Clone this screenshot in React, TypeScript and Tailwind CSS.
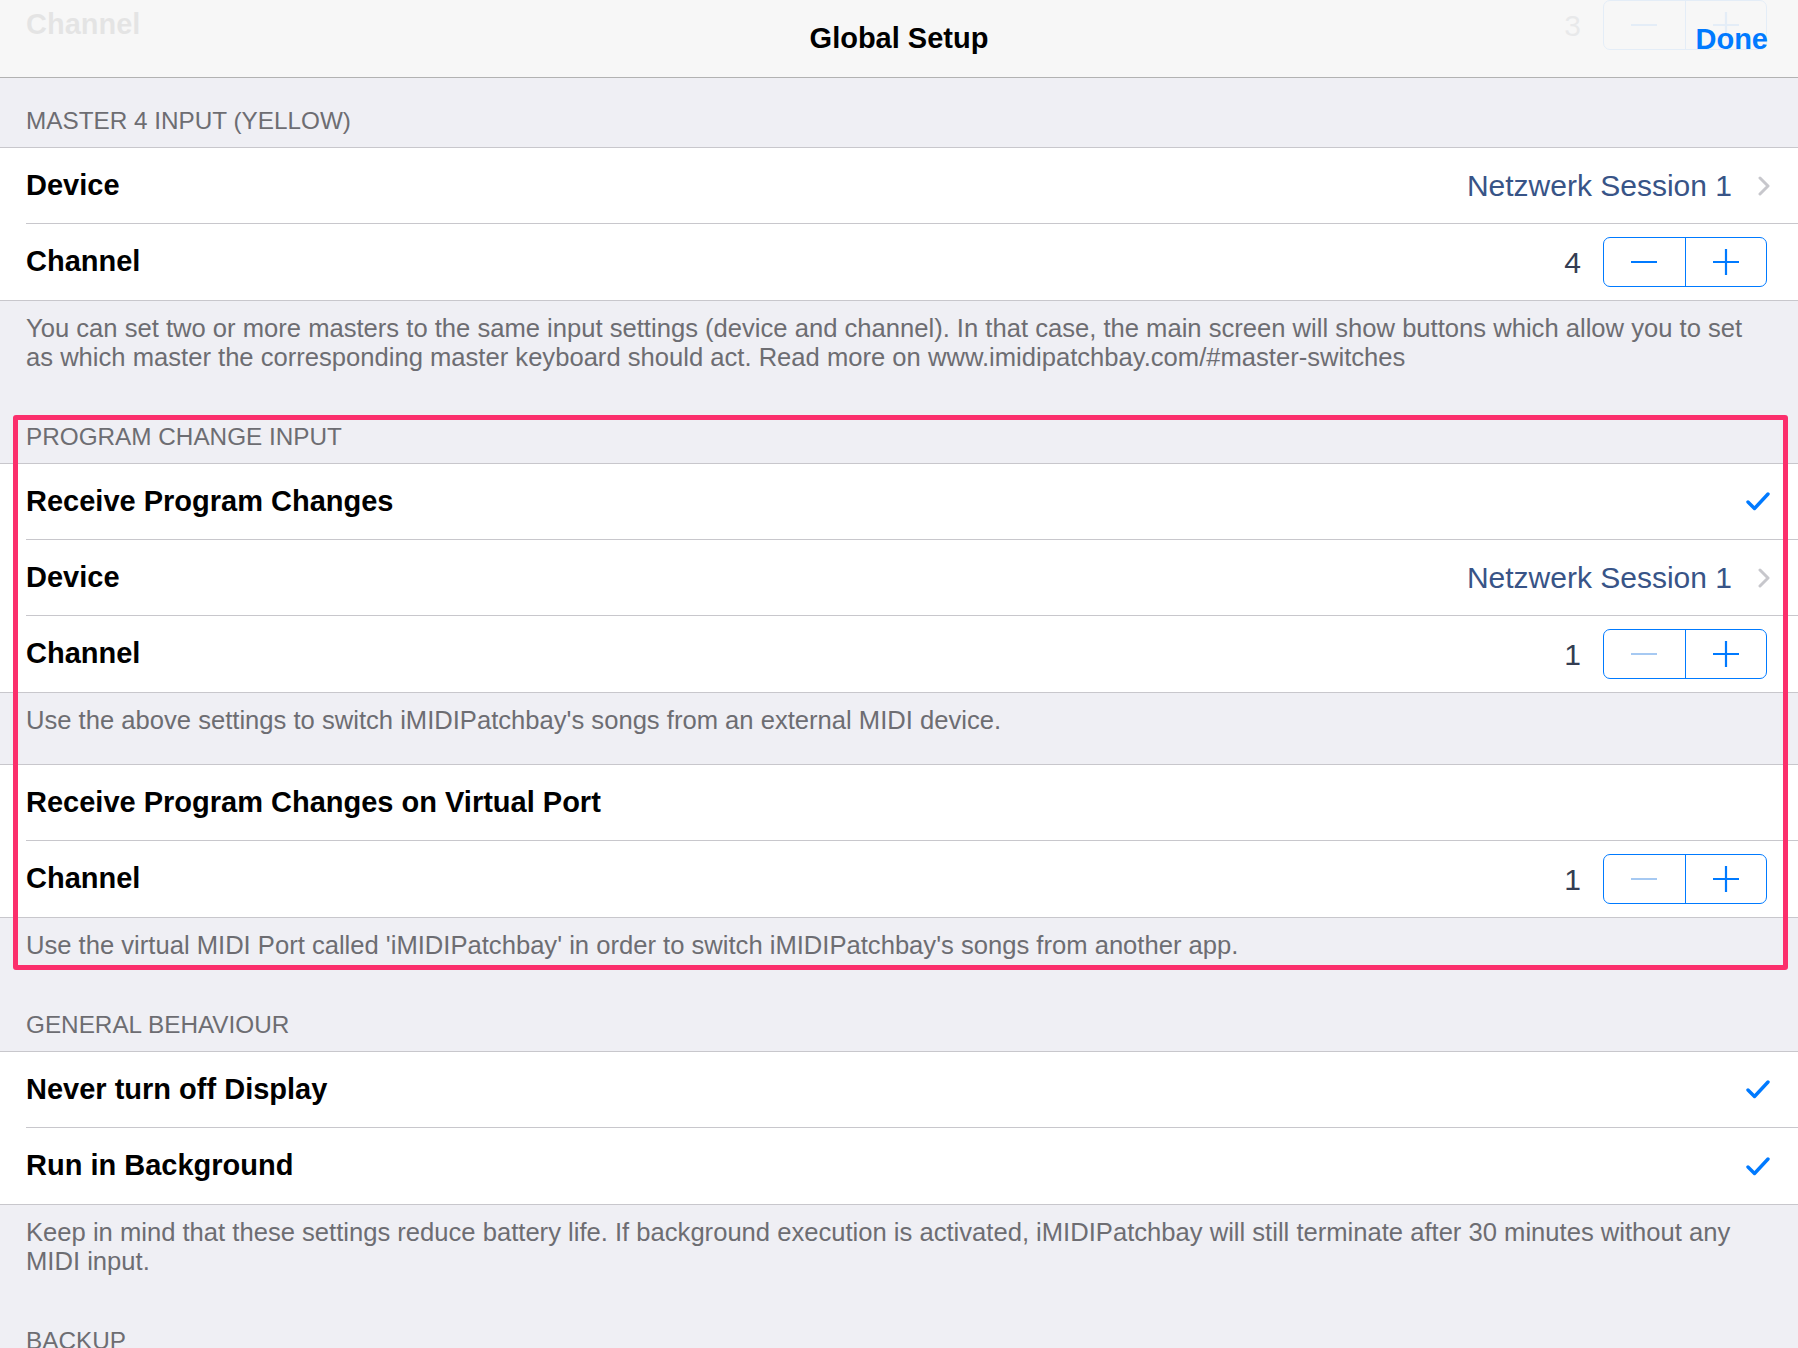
import React from 'react'

// iOS 7 style settings sheet: "Global Setup"

const FONT = "font-['Liberation_Sans',Arial,sans-serif]"

function Chevron() {
  return (
    <svg width="12" height="20" viewBox="0 0 12 20" className="ml-[26px]">
      <path d="M2 2 L10 10 L2 18" fill="none" stroke="#c7c7cc" strokeWidth="3" strokeLinecap="round" strokeLinejoin="round" />
    </svg>
  )
}

function Check() {
  return (
    <svg width="24" height="19" viewBox="0 0 24 19">
      <path d="M2 10 L8.5 16.5 L22 2" fill="none" stroke="#007aff" strokeWidth="3.4" strokeLinecap="round" strokeLinejoin="round" />
    </svg>
  )
}

function Stepper({ minusDisabled = false }: { minusDisabled?: boolean }) {
  return (
    <div className="flex h-[50px] w-[164px] rounded-[7px] border-[1.5px] border-[#007aff] mr-[3px]">
      <div className="flex flex-1 items-center justify-center border-r-[1.5px] border-[#007aff]">
        <div className={`h-[2px] w-[26px] ${minusDisabled ? 'bg-[#a6c9f2]' : 'bg-[#007aff]'}`} />
      </div>
      <div className="flex flex-1 items-center justify-center">
        <svg width="28" height="28" viewBox="0 0 28 28">
          <path d="M14 1 V27 M1 14 H27" stroke="#007aff" strokeWidth="2.2" />
        </svg>
      </div>
    </div>
  )
}

type RowProps = {
  label: string
  last?: boolean
  children?: React.ReactNode
}

function Row({ label, last = false, children }: RowProps) {
  return (
    <div className="flex pl-[26px]">
      <div className={`flex h-[76px] flex-1 items-center justify-between pr-[28px] ${last ? '' : 'border-b border-[#c8c7cc]'}`}>
        <span className="text-[29px] font-bold text-black">{label}</span>
        <div className="flex items-center">{children}</div>
      </div>
    </div>
  )
}

function DeviceValue() {
  return (
    <>
      <span className="text-[30px] text-[#385487]">Netzwerk Session 1</span>
      <Chevron />
    </>
  )
}

function ChannelValue({ value, minusDisabled }: { value: number; minusDisabled?: boolean }) {
  return (
    <>
      <span className="mr-[22px] text-[30px] text-[#343d52]">{value}</span>
      <Stepper minusDisabled={minusDisabled} />
    </>
  )
}

function Group({ children }: { children: React.ReactNode }) {
  return <div className="border-y border-[#c8c7cc] bg-white">{children}</div>
}

function Header({ title }: { title: string }) {
  return (
    <div className="px-[26px] pt-[28px] pb-[12px] text-[24.3px] leading-[29px] text-[#6d6d72]">{title}</div>
  )
}

function Footer({ children, pb = 'pb-[22px]' }: { children: React.ReactNode; pb?: string }) {
  return (
    <div className={`px-[26px] pt-[13px] ${pb} text-[25.6px] leading-[29px] text-[#6d6d72] whitespace-nowrap`}>{children}</div>
  )
}

export default function App() {
  return (
    <div className={`relative min-h-[1348px] w-full overflow-hidden bg-[#efeff4] ${FONT}`}>
      {/* nav bar, with the scrolled content faintly showing through */}
      <div className="relative flex h-[78px] items-center justify-center overflow-hidden border-b border-[#b2b2b2] bg-[#f7f7f7]">
        <div className="absolute left-0 right-0 top-[-13px] opacity-[0.07]">
          <Row label="Channel" last>
            <ChannelValue value={3} />
          </Row>
        </div>
        <span className="text-[29px] font-bold text-black">Global Setup</span>
        <span className="absolute right-[30px] top-[18px] text-[29px] font-bold text-[#007aff]">Done</span>
      </div>

      <Header title="MASTER 4 INPUT (YELLOW)" />
      <Group>
        <Row label="Device">
          <DeviceValue />
        </Row>
        <Row label="Channel" last>
          <ChannelValue value={4} />
        </Row>
      </Group>
      <Footer>
        You can set two or more masters to the same input settings (device and channel). In that case, the main screen will show buttons which allow you to set
        <br />
        as which master the corresponding master keyboard should act. Read more on www.imidipatchbay.com/#master-switches
      </Footer>

      <Header title="PROGRAM CHANGE INPUT" />
      <Group>
        <Row label="Receive Program Changes">
          <Check />
        </Row>
        <Row label="Device">
          <DeviceValue />
        </Row>
        <Row label="Channel" last>
          <ChannelValue value={1} minusDisabled />
        </Row>
      </Group>
      <Footer pb="pb-[29px]">Use the above settings to switch iMIDIPatchbay's songs from an external MIDI device.</Footer>
      <Group>
        <Row label="Receive Program Changes on Virtual Port" />
        <Row label="Channel" last>
          <ChannelValue value={1} minusDisabled />
        </Row>
      </Group>
      <Footer>Use the virtual MIDI Port called 'iMIDIPatchbay' in order to switch iMIDIPatchbay's songs from another app.</Footer>

      <Header title="GENERAL BEHAVIOUR" />
      <Group>
        <Row label="Never turn off Display">
          <Check />
        </Row>
        <Row label="Run in Background" last>
          <Check />
        </Row>
      </Group>
      <Footer>
        Keep in mind that these settings reduce battery life. If background execution is activated, iMIDIPatchbay will still terminate after 30 minutes without any
        <br />
        MIDI input.
      </Footer>

      <Header title="BACKUP" />

      {/* highlight annotation drawn over the program change section */}
      <div className="pointer-events-none absolute left-[13px] top-[415px] h-[555px] w-[1775px] rounded-[3px] border-[5px] border-[#fb2f6c]" />
    </div>
  )
}
